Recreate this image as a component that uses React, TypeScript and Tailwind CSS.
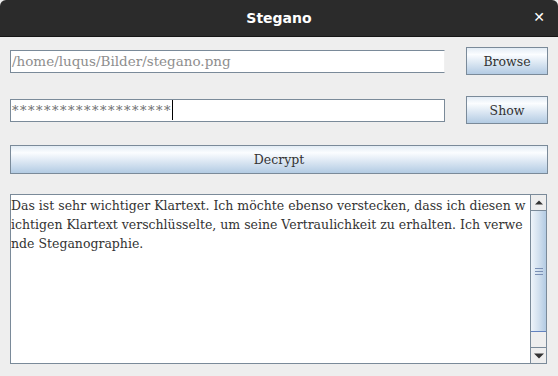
import React from "react";

const serif = { fontFamily: '"DejaVu Serif", "Liberation Serif", serif' };

function MetalButton({ label, className }: { label: string; className: string }) {
  return (
    <div
      className={`flex items-center justify-center pt-[2px] border border-[#7a8a99] bg-gradient-to-b from-[#e3ecf5] via-[#fbfdff] via-25% to-[#b3cbe3] text-[12.5px] text-[#333] ${className}`}
      style={serif}
    >
      {label}
    </div>
  );
}

const lines = [
  "Das ist sehr wichtiger Klartext. Ich möchte ebenso verstecken, dass ich diesen w",
  "ichtigen Klartext verschlüsselte, um seine Vertraulichkeit zu erhalten. Ich verwe",
  "nde Steganographie.",
];

export default function App() {
  return (
    <div className="w-[558px] h-[376px] bg-[#eeeeee] flex flex-col overflow-hidden">
      {/* title bar */}
      <div className="h-[37px] shrink-0 bg-[#2b2b2b] rounded-t-[6px] border-b border-[#161616] relative flex items-center justify-center">
        <span
          className="text-white text-[14px] font-bold"
          style={{ fontFamily: '"DejaVu Sans", "Noto Sans", sans-serif' }}
        >
          Stegano
        </span>
        <span className="absolute right-[13px] top-[10px] text-white text-[14px] font-bold leading-none" style={{ fontFamily: '"DejaVu Sans", sans-serif' }}>
          ✕
        </span>
      </div>

      <div className="flex flex-col pl-[10px] pr-[10px]">
        {/* row 1 */}
        <div className="flex items-center mt-[10px] h-[28px]">
          <div
            className="w-[435px] h-[23px] border border-[#7a8a99] border-r-[#f0f0f0] bg-white flex items-center pl-[1px] text-[13.5px] text-[#8e8e8e] whitespace-pre"
            style={serif}
          >
            /home/luqus/Bilder/stegano.png
          </div>
          <MetalButton label="Browse" className="ml-[21px] w-[82px] h-[28px]" />
        </div>

        {/* row 2 */}
        <div className="flex items-center mt-[21px] h-[28px]">
          <div
            className="w-[435px] h-[23px] border border-[#7a8a99] bg-white flex items-center pl-[1px] text-[13px] text-[#6e6e6e]"
            style={serif}
          >
            <span className="tracking-[1.5px] leading-none">********************</span>
            <span className="w-[1px] h-[20px] bg-black" />
          </div>
          <MetalButton label="Show" className="ml-[21px] w-[82px] h-[28px]" />
        </div>

        {/* decrypt */}
        <MetalButton label="Decrypt" className="mt-[21px] w-[538px] h-[29px]" />

        {/* text area */}
        <div className="mt-[20px] w-[537px] h-[170px] border border-[#7a8a99] bg-white flex">
          <div
            className="flex-1 pt-[1px] text-[12.5px] leading-[19px] text-[#333] whitespace-pre overflow-hidden"
            style={serif}
          >
            {lines.map((l) => (
              <div key={l}>{l}</div>
            ))}
          </div>
          <div className="w-[16px] border-l border-[#7a8a99] flex flex-col bg-[#eeeeee]">
            <div className="h-[16px] border-b border-[#7a8a99] bg-[#eeeeee] flex items-center justify-center">
              <svg width="8" height="5" viewBox="0 0 8 5">
                <path d="M0 4.5 L4 0.5 L8 4.5 Z" fill="#333" />
              </svg>
            </div>
            <div className="h-[121px] border-b border-[#6382bf] bg-gradient-to-r from-[#eef4fa] via-[#d3e1ef] to-[#b3cbe3] flex items-center justify-center">
              <div className="flex flex-col gap-[2px]">
                <div className="w-[8px] h-[1px] bg-[#7a8fb4]" />
                <div className="w-[8px] h-[1px] bg-[#7a8fb4]" />
                <div className="w-[8px] h-[1px] bg-[#7a8fb4]" />
              </div>
            </div>
            <div className="flex-1" />
            <div className="h-[16px] border-t border-[#7a8a99] bg-[#eeeeee] flex items-center justify-center">
              <svg width="10" height="6" viewBox="0 0 10 6">
                <path d="M0 0.5 L10 0.5 L5 5.5 Z" fill="#333" />
              </svg>
            </div>
          </div>
        </div>
      </div>
    </div>
  );
}
